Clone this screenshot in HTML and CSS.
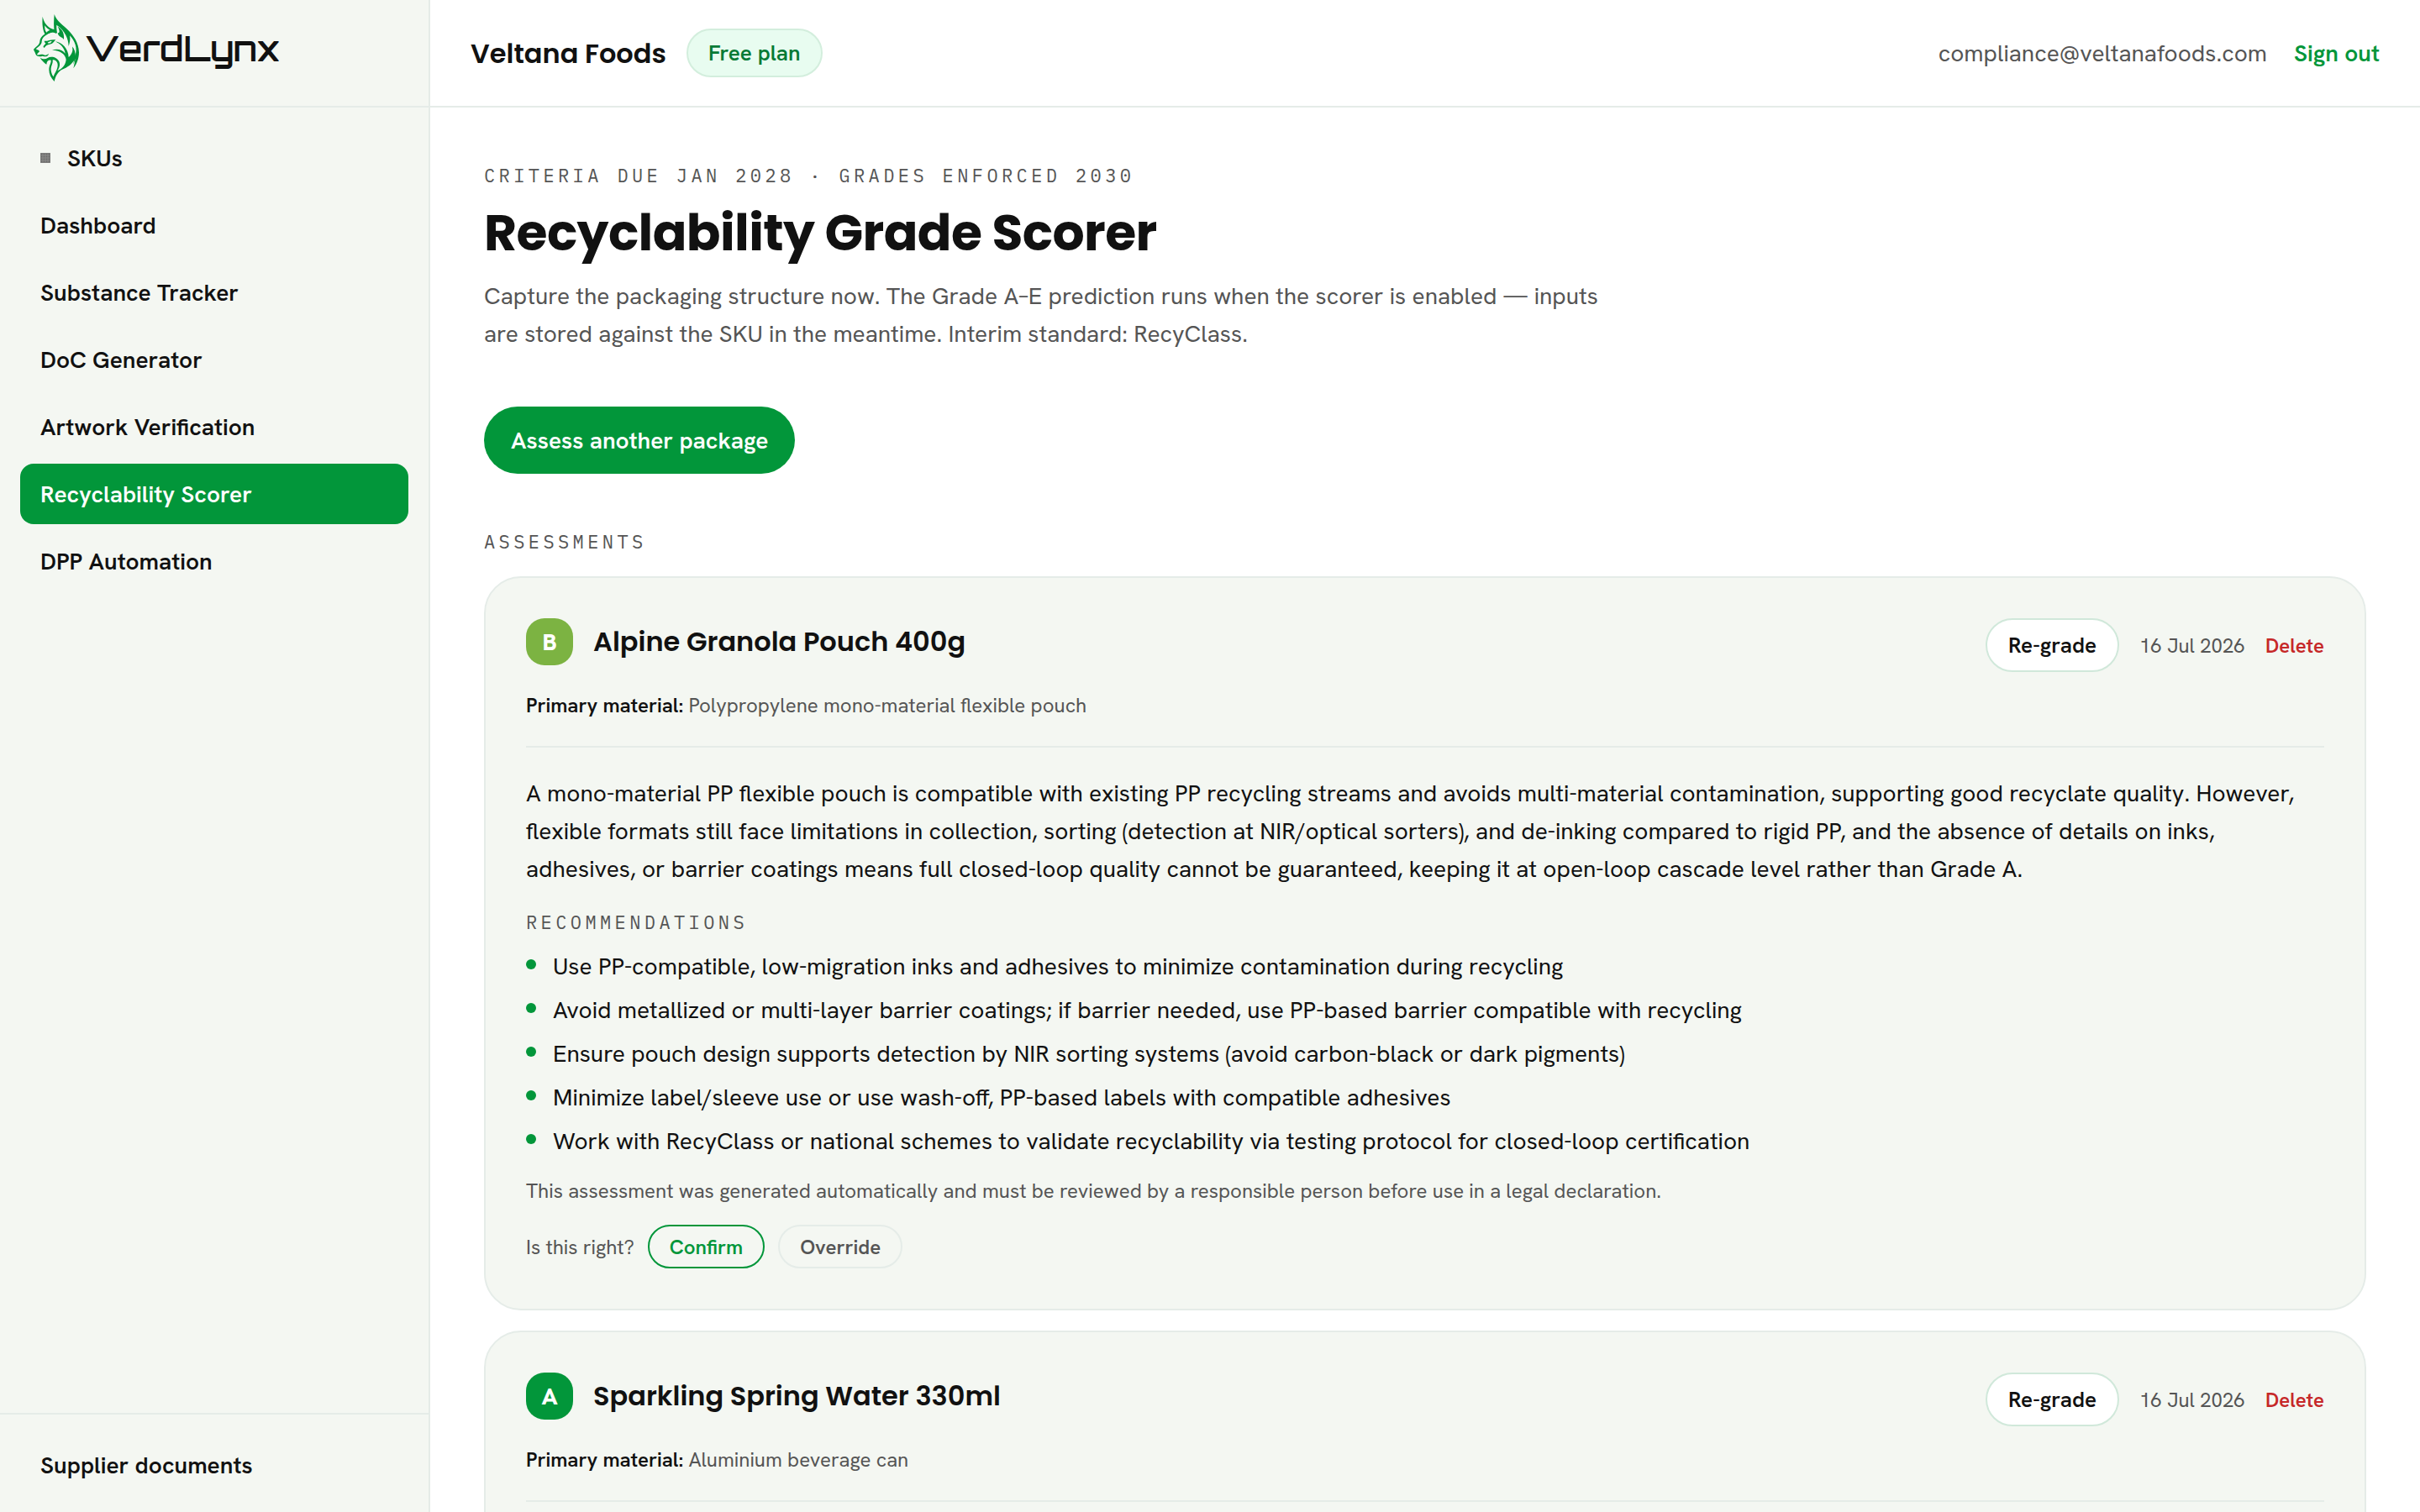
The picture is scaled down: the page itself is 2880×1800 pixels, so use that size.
FILE: index.html
```html
<!DOCTYPE html>
<html lang="en">
<head>
  <meta charset="UTF-8">
  <meta name="viewport" content="width=device-width, initial-scale=1.0">
  <title>Recyclability Grade Scorer – VerdLynx</title>
  <link rel="stylesheet" href="styles.css">
</head>
<body>
  <div class="app">

    <!-- Sidebar -->
    <aside class="sidebar">
      <a class="brand" href="#">
        <svg class="brand-mark" viewBox="120 48 165 240" aria-hidden="true">
          <!-- ears -->
          <path d="M152 56C157 78 169 97 196 103L195 114C184 110 173 114 163 123C152 106 150 82 152 56ZM160 88C159 98 161 107 166 113C169 109 174 106 179 105C171 101 165 96 160 88Z"/>
          <path d="M194 48C202 74 228 88 243 104C262 124 281 148 282 184C282 206 274 226 262 241C265 228 268 216 268 206C258 226 240 238 222 245C207 253 198 268 194 288C182 276 175 262 175 246C175 230 183 222 182 212C174 210 167 214 166 227C158 221 149 213 143 203C154 209 162 209 170 204C184 196 204 202 211 217C216 229 212 239 205 250C222 243 234 229 236 210C234 191 216 177 186 176C205 170 222 174 233 188C230 168 216 154 197 145C222 149 244 171 245 201C256 192 262 178 258 164C267 174 270 186 268 197C278 170 268 144 249 124C252 138 249 150 245 162C244 136 234 108 202 86C201 96 203 106 204 114C202 117 198 117 195 114C191 94 192 70 194 48ZM188 211C190 225 181 232 182 248C183 258 187 266 191 271C195 257 207 244 206 228C205 217 198 211 188 211Z"/>
          <path d="M206 92C222 100 230 114 228 138C222 129 208 129 206 115C214 116 214 106 206 92Z"/>
          <!-- face -->
          <path d="M196 110C174 114 150 126 149 144C150 157 137 163 128 172C133 176 139 175 141 181C137 186 133 187 132 193C142 195 148 189 156 193C161 196 167 194 174 188C172 200 161 201 152 197C143 200 129 200 127 190C126 183 121 180 120 173C130 163 141 158 142 145C143 124 168 109 196 110Z"/>
          <path d="M158 143C169 145 183 136 199 139C192 145 190 154 178 155C168 156 164 160 158 168C154 164 153 163 158 158C162 153 166 150 160 149ZM170 149C171 153 181 153 185 144C179 144 174 146 170 149Z"/>
          <path d="M258 163C271 183 272 206 262 227C266 205 266 184 258 163Z"/>
        </svg>
        <span class="brand-name">VerdLynx</span>
      </a>

      <nav class="nav">
        <a class="nav-link" href="#">
          <svg class="nav-icon" viewBox="0 0 12 12" aria-hidden="true">
            <rect width="12" height="12"/>
            <path d="M3 1v10M6 1v10M9 1v10M1 3h10M1 6h10M1 9h10"/>
          </svg>
          SKUs
        </a>
        <a class="nav-link" href="#">Dashboard</a>
        <a class="nav-link" href="#">Substance Tracker</a>
        <a class="nav-link" href="#">DoC Generator</a>
        <a class="nav-link" href="#">Artwork Verification</a>
        <a class="nav-link active" href="#" aria-current="page">Recyclability Scorer</a>
        <a class="nav-link" href="#">DPP Automation</a>
      </nav>

      <div class="sidebar-footer">
        <a class="nav-link" href="#">Supplier documents</a>
      </div>
    </aside>

    <div class="content">
      <!-- Top bar -->
      <header class="topbar">
        <span class="company">Veltana Foods</span>
        <span class="plan">Free plan</span>
        <div class="account">
          <span class="email">compliance@veltanafoods.com</span>
          <button class="sign-out" type="button">Sign out</button>
        </div>
      </header>

      <main class="page">
        <p class="eyebrow">Criteria due Jan 2028 · Grades enforced 2030</p>
        <h1 class="page-title">Recyclability Grade Scorer</h1>
        <p class="lead">Capture the packaging structure now. The Grade A–E prediction runs when the scorer is enabled — inputs are stored against the SKU in the meantime. Interim standard: RecyClass.</p>

        <button class="btn-primary" type="button">Assess another package</button>

        <h2 class="eyebrow">Assessments</h2>

        <div class="cards">
          <article class="card">
            <div class="card-head">
              <span class="grade grade-b">B</span>
              <h3 class="card-title">Alpine Granola Pouch 400g</h3>
              <div class="card-actions">
                <button class="btn-outline" type="button">Re-grade</button>
                <time class="date" datetime="2026-07-16">16 Jul 2026</time>
                <button class="delete" type="button">Delete</button>
              </div>
            </div>
            <p class="material"><strong>Primary material:</strong> Polypropylene mono-material flexible pouch</p>

            <div class="card-body">
              <p class="rationale">A mono-material PP flexible pouch is compatible with existing PP recycling streams and avoids multi-material contamination, supporting good recyclate quality. However, flexible formats still face limitations in collection, sorting (detection at NIR/optical sorters), and de-inking compared to rigid PP, and the absence of details on inks, adhesives, or barrier coatings means full closed-loop quality cannot be guaranteed, keeping it at open-loop cascade level rather than Grade A.</p>
              <h4 class="eyebrow">Recommendations</h4>
              <ul class="recs">
                <li>Use PP-compatible, low-migration inks and adhesives to minimize contamination during recycling</li>
                <li>Avoid metallized or multi-layer barrier coatings; if barrier needed, use PP-based barrier compatible with recycling</li>
                <li>Ensure pouch design supports detection by NIR sorting systems (avoid carbon-black or dark pigments)</li>
                <li>Minimize label/sleeve use or use wash-off, PP-based labels with compatible adhesives</li>
                <li>Work with RecyClass or national schemes to validate recyclability via testing protocol for closed-loop certification</li>
              </ul>
              <p class="disclaimer">This assessment was generated automatically and must be reviewed by a responsible person before use in a legal declaration.</p>
              <div class="review">
                <span>Is this right?</span>
                <button class="btn-small confirm" type="button">Confirm</button>
                <button class="btn-small" type="button">Override</button>
              </div>
            </div>
          </article>

          <article class="card">
            <div class="card-head">
              <span class="grade grade-a">A</span>
              <h3 class="card-title">Sparkling Spring Water 330ml</h3>
              <div class="card-actions">
                <button class="btn-outline" type="button">Re-grade</button>
                <time class="date" datetime="2026-07-16">16 Jul 2026</time>
                <button class="delete" type="button">Delete</button>
              </div>
            </div>
            <p class="material"><strong>Primary material:</strong> Aluminium beverage can</p>
            <div class="card-body"></div>
          </article>
        </div>
      </main>
    </div>

  </div>
</body>
</html>
```
FILE: styles.css
```css
:root {
  --green: #02963a;
  --green-dark: #067a35;
  --ink: #111111;
  --muted: #555555;
  --line: #e5ece8;
  --mint: #d0e8da;
  --surface: #f4f7f2;
  --heading: Poppins, Inter, sans-serif;
  --mono: "IBM Plex Mono", "Liberation Mono", monospace;
}

* {
  box-sizing: border-box;
}

body {
  margin: 0;
  font-family: "Hanken Grotesk", Roboto, sans-serif;
  font-size: 28px;
  line-height: 45px;
  color: var(--ink);
  background: #fff;
}

h1, h2, h3, h4, p, ul {
  margin: 0;
}

a {
  color: inherit;
  text-decoration: none;
}

button {
  font: inherit;
  color: inherit;
  padding: 0;
  border: 0;
  background: none;
  cursor: pointer;
}

.app {
  display: flex;
  height: 100vh;
  overflow: hidden;
}

/* Sidebar */
.sidebar {
  display: flex;
  flex-direction: column;
  flex: 0 0 512px;
  background: var(--surface);
  border-right: 2px solid var(--line);
}

.brand {
  display: flex;
  align-items: center;
  gap: 6px;
  height: 128px;
  padding: 0 40px 12px;
  border-bottom: 2px solid var(--line);
}

.brand-mark {
  width: 55px;
  height: 80px;
  fill: var(--green);
}

.brand-name {
  font-family: Orbitron, "DejaVu Sans", sans-serif;
  font-weight: 600;
  font-size: 41px;
}

.nav {
  display: flex;
  flex-direction: column;
  flex: 1;
  gap: 8px;
  padding: 24px;
}

.nav-link {
  display: flex;
  align-items: center;
  gap: 20px;
  height: 72px;
  padding: 0 24px;
  border-radius: 16px;
  font-weight: 600;
}

.nav-link.active {
  color: #fff;
  background: var(--green);
}

.nav-icon {
  width: 12px;
  height: 12px;
  fill: #6a6a6a;
  stroke: #8c8c8a;
  stroke-width: 1;
}

.sidebar-footer {
  padding: 24px 24px 20px;
  border-top: 2px solid var(--line);
}

/* Top bar */
.content {
  display: flex;
  flex-direction: column;
  flex: 1;
  min-width: 0;
}

.topbar {
  display: flex;
  flex-shrink: 0;
  align-items: center;
  gap: 24px;
  height: 128px;
  padding: 0 48px;
  border-bottom: 2px solid var(--line);
}

.company,
.card-title {
  font-family: var(--heading);
  font-weight: 600;
  font-size: 32px;
}

.plan {
  padding: 6px 24px;
  border: 2px solid #d3eedd;
  border-radius: 29px;
  font-weight: 600;
  font-size: 26px;
  line-height: 42px;
  color: var(--green-dark);
  background: #e8fcf0;
}

.account {
  display: flex;
  gap: 32px;
  margin-left: auto;
}

.email {
  color: var(--muted);
}

.sign-out {
  font-weight: 600;
  color: var(--green);
}

/* Page */
.page {
  flex: 1;
  padding: 64px;
  overflow: hidden;
}

.eyebrow {
  font-family: var(--mono);
  font-weight: 400;
  font-size: 22px;
  line-height: 34px;
  letter-spacing: 0.2em;
  text-transform: uppercase;
  color: var(--muted);
}

.page-title {
  margin: 18px 0 20px;
  font-family: var(--heading);
  font-weight: 700;
  font-size: 60px;
  line-height: 66px;
  letter-spacing: -0.01em;
}

.lead {
  max-width: 1344px;
  color: var(--muted);
}

.btn-primary {
  height: 80px;
  margin: 64px 0;
  padding: 0 32px;
  border-radius: 40px;
  font-weight: 600;
  color: #fff;
  background: var(--green);
}

/* Assessment cards */
.cards {
  display: flex;
  flex-direction: column;
  gap: 24px;
  margin-top: 24px;
}

.card {
  padding: 48px;
  border: 2px solid var(--line);
  border-radius: 44px;
  background: var(--surface);
}

.card-head {
  display: flex;
  align-items: flex-start;
  gap: 24px;
}

.grade {
  width: 56px;
  border-radius: 22px;
  font-weight: 800;
  line-height: 56px;
  text-align: center;
  color: #fff;
}

.grade-a {
  background: var(--green);
}

.grade-b {
  background: #7cb342;
}

.card-title {
  line-height: 56px;
}

.card-actions {
  display: flex;
  align-items: center;
  gap: 24px;
  margin-left: auto;
  font-size: 24px;
}

.btn-outline {
  height: 64px;
  padding: 0 25px;
  border: 2px solid var(--mint);
  border-radius: 32px;
  font-weight: 600;
  font-size: 26px;
  background: #fff;
}

.date {
  color: var(--muted);
}

.delete {
  font-weight: 600;
  color: #c62828;
}

.material {
  margin-top: 20px;
  font-size: 24px;
  line-height: 40px;
  color: var(--muted);
}

.material strong {
  font-weight: 600;
  color: var(--ink);
}

.card-body {
  margin-top: 28px;
  padding-top: 32px;
  border-top: 2px solid var(--line);
}

.rationale {
  margin-bottom: 24px;
}

.recs {
  display: grid;
  gap: 7px;
  margin-top: 13px;
  padding: 0;
  list-style: none;
}

.recs li {
  display: flex;
  gap: 20px;
}

.recs li::before {
  content: "";
  width: 12px;
  height: 12px;
  margin-top: 14px;
  border-radius: 50%;
  background: var(--green);
}

.disclaimer {
  margin: 17px 0 20px;
  font-size: 24px;
  line-height: 40px;
  color: var(--muted);
}

.review {
  display: flex;
  align-items: center;
  gap: 16px;
  font-size: 24px;
  color: var(--muted);
}

.btn-small {
  height: 52px;
  padding: 0 24px;
  border: 2px solid var(--line);
  border-radius: 26px;
  font-weight: 600;
}

.confirm {
  border-color: var(--green);
  color: var(--green);
}
```
